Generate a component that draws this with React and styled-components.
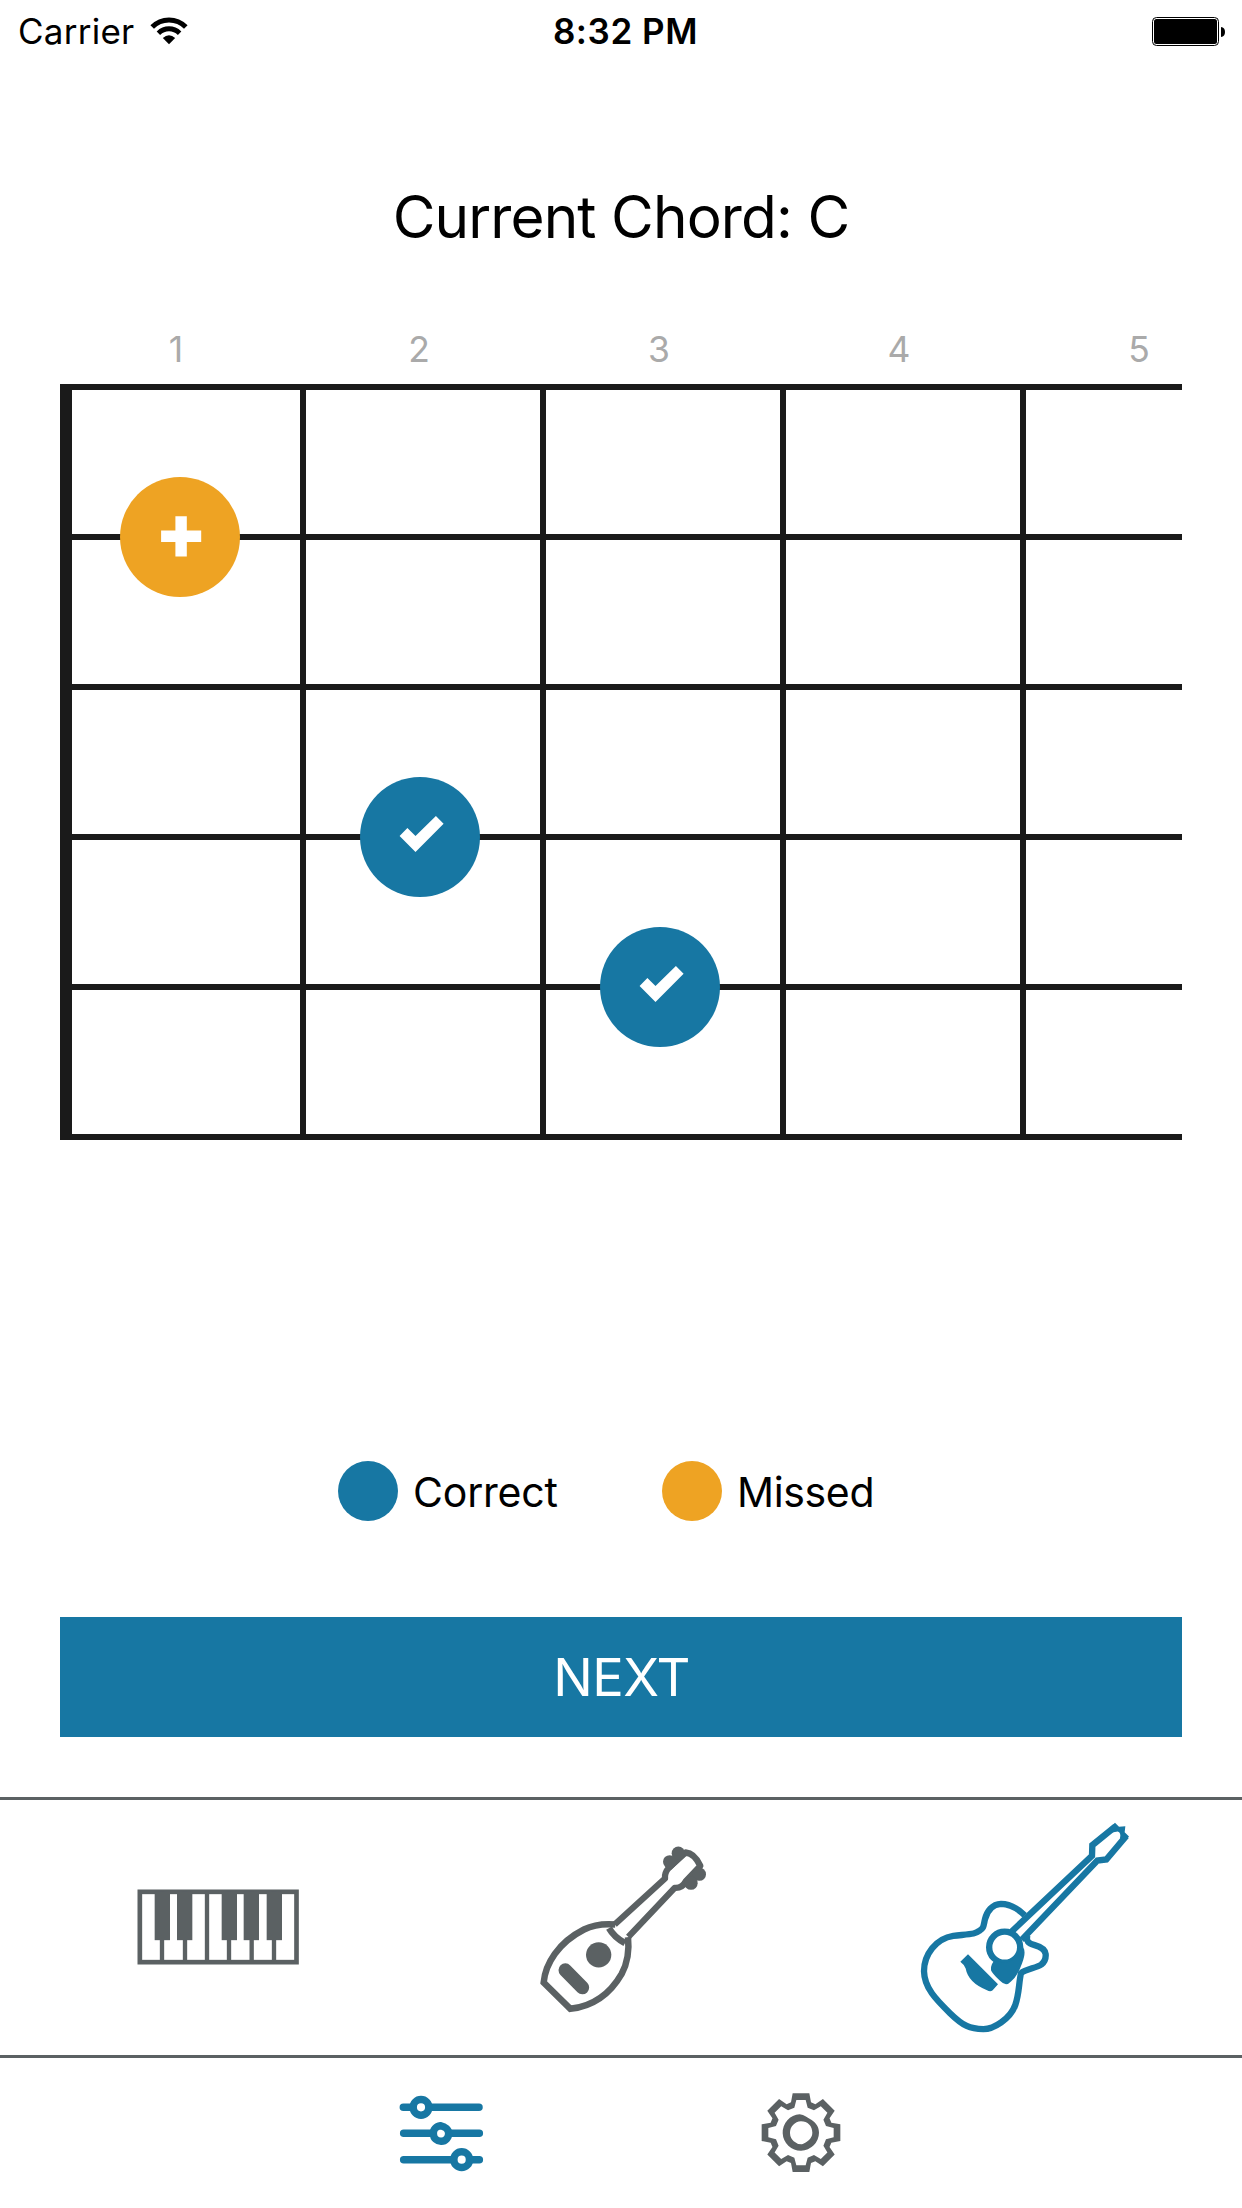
import React from "react";
import styled, { createGlobalStyle } from "styled-components";

const BLUE = "#1777a3";
const ORANGE = "#eea323";
const INK = "#1a1a1a";
const GRAY = "#5b6163";

const GlobalStyle = createGlobalStyle`
  * { box-sizing: border-box; }
  body {
    margin: 0;
    background: #fff;
    color: #000;
    font-family: Inter, "Liberation Sans", sans-serif;
  }
`;

const Screen = styled.div`
  display: flex;
  flex-direction: column;
  width: 1242px;
  height: 2208px;
  overflow: hidden;
  background: #fff;
`;

const StatusBar = styled.header`
  display: grid;
  grid-template-columns: 1fr auto 1fr;
  align-items: center;
  height: 62px;
  padding: 0 17px 0 18px;
  font-size: 35px;
  line-height: 62px;
`;

const Carrier = styled.div`
  display: flex;
  align-items: center;
  gap: 16px;
  letter-spacing: 0.25px;
`;

const Clock = styled.div`
  font-weight: 600;
  letter-spacing: 0.55px;
  padding-left: 8px;
`;

const Battery = styled.div`
  display: flex;
  justify-content: flex-end;
`;

const Title = styled.h1`
  margin: 115px 0 0;
  height: 80px;
  line-height: 80px;
  font-size: 58.5px;
  font-weight: 400;
  letter-spacing: -0.9px;
  text-align: center;
  white-space: nowrap;
`;

const FretLabels = styled.div`
  display: grid;
  grid-template-columns: 234px 246px repeat(3, 240px);
  height: 70px;
  margin: 57px 0 0 59px;
  line-height: 71px;
  font-size: 35.5px;
  color: #aaaaaa;
  text-align: center;
`;

const FretLabel = styled.span`
  padding-right: ${(p) => (p.$second ? 6 : 0)}px;
  margin-left: ${(p) => (p.$second ? 6 : 0)}px;
  margin-right: ${(p) => (p.$second ? -6 : 0)}px;
`;

const Fretboard = styled.div`
  display: grid;
  grid-template-columns: repeat(4, 240px) 162px;
  grid-auto-rows: 150px;
  width: 1122px;
  height: 756px;
  margin: 0 60px;
  border-bottom: 6px solid ${INK};
`;

const FretCell = styled.div`
  position: relative;
  border-top: 6px solid ${INK};
  border-left: ${(p) => (p.$nut ? 12 : 6)}px solid ${INK};
`;

const Marker = styled.div`
  position: absolute;
  z-index: 1;
  left: ${(p) => (p.$nut ? 48 : 54)}px;
  bottom: -63px;
  width: 120px;
  height: 120px;
  border-radius: 50%;
  background: ${(p) => p.$color};
`;

const Legend = styled.div`
  display: flex;
  align-items: center;
  height: 60px;
  margin: 321px 0 0 338px;
`;

const LegendItem = styled.div`
  display: flex;
  align-items: center;
  width: 324px;
  gap: 15px;
  font-size: 41px;
  line-height: 60px;
  letter-spacing: ${(p) => p.$spacing};
`;

const LegendText = styled.span`
  padding-top: 2px;
`;

const LegendDot = styled.span`
  width: 60px;
  height: 60px;
  border-radius: 50%;
  background: ${(p) => p.$color};
`;

const NextButton = styled.button`
  height: 120px;
  margin: 96px 60px 60px;
  padding: 0 0 0 1px;
  border: 0;
  background: ${BLUE};
  color: #fff;
  font: 400 52.5px/120px Inter, "Liberation Sans", sans-serif;
  letter-spacing: -0.5px;
`;

const InstrumentBar = styled.nav`
  display: grid;
  grid-template-columns: repeat(3, 1fr);
  place-items: center;
  height: 258px;
  border-top: 3px solid ${GRAY};
`;

const BottomBar = styled.nav`
  display: flex;
  justify-content: center;
  align-items: center;
  height: 153px;
  border-top: 3px solid ${GRAY};
`;

const BottomTab = styled.div`
  display: grid;
  place-items: center;
  width: 360px;
`;

const Icon = styled.svg`
  display: block;
  flex: none;
`;

function WifiIcon() {
  return (
    <Icon width="38" height="28" viewBox="0 0 38 28" fill="none" stroke="#000" strokeWidth="5">
      <path d="M2.2 10C11.5 0.5 26.5 0.5 35.8 10" />
      <path d="M8.4 16.2C14.5 10.4 23.5 10.4 29.6 16.2" />
      <path d="M12.8 20.9Q19 15.6 25.2 20.9L19 27.2Z" fill="#000" stroke="none" />
    </Icon>
  );
}

function BatteryIcon() {
  return (
    <Icon width="73" height="29" viewBox="0 0 73 29">
      <rect x="0.5" y="0.5" width="66" height="28" rx="4" fill="#fff" stroke="#000" />
      <rect x="2" y="2" width="63" height="25" rx="2.5" />
      <path d="M69 10Q73 10.5 73 15Q73 19.5 69 20Z" />
    </Icon>
  );
}

function PlusMark() {
  return (
    <Icon width="120" height="120" viewBox="0 0 120 120" fill="#fff">
      <path d="M55.4 39.3H66.8V53.6H81.2V65H66.8V79.5H55.4V65H41.1V53.6H55.4Z" />
    </Icon>
  );
}

function CheckMark() {
  return (
    <Icon width="120" height="120" viewBox="0 0 120 120" fill="#fff">
      <path d="M39.6 59.1L47.4 51.1L55.5 59.1L75.9 39L83.6 46.7L55.5 75Z" />
    </Icon>
  );
}

const BLACK_KEYS = [104, 171, 305, 371, 440];
const KEY_LINES = [126, 195, 261, 327, 395, 462];

function PianoIcon() {
  return (
    <Icon width="200" height="200" viewBox="-39 142.5 600 600" fill={GRAY}>
      <rect x="59.5" y="334" width="470" height="211" fill="#fff" stroke={GRAY} strokeWidth="14" />
      {KEY_LINES.map((x) => (
        <rect key={x} x={x - 6.5} y="334" width="13" height="210" />
      ))}
      {BLACK_KEYS.map((x) => (
        <rect key={x} x={x} y="334" width="46" height="145" />
      ))}
    </Icon>
  );
}

function UkuleleIcon() {
  return (
    <Icon width="210" height="210" viewBox="-12 7.5 630 630" fill="none" stroke={GRAY} strokeWidth="19.5">
      <path d="M286 312C250 309 220 313 192 327C115 366 76 430 71 486L151 565C230 556 275 512 305 460C324 425 328 388 324 350" />
      <path d="M267 323Q282 350 315 368" />
      <path d="M284 312L435 174Q433 157 447 141L497 96Q523 98 541 136L497 183Q486 204 464 202L325 349" strokeWidth="19" strokeLinejoin="round" />
      <path d="M440 128L478 92L500 104L452 150Z M492 176L530 141L543 152L510 190Z" fill={GRAY} stroke="none" />
      <g fill={GRAY} stroke="none">
        <circle cx="475" cy="98" r="20" />
        <circle cx="449" cy="124" r="20" />
        <circle cx="538" cy="161" r="20" />
        <circle cx="513" cy="188" r="20" />
        <circle cx="236" cy="403" r="38" />
      </g>
      <path d="M136 449L187 501" strokeWidth="41" strokeLinecap="round" />
    </Icon>
  );
}

function GuitarIcon() {
  return (
    <Icon width="250" height="250" viewBox="30 -22.5 750 750" fill="none" stroke={BLUE} strokeWidth="19">
      <path d="M374 314C350 291 328 280 303 280C276 281 261 303 255 326C250 348 252 352 238 361C225 371 217 370 160 376C108 384 72 432 72 482C73 532 108 567 150 608C190 647 210 655 250 656C280 656 331 626 346 583C358 548 356 519 363 488C378 476 410 472 424 462C434 454 438 444 437 431C435 415 422 409 404 404C384 398 378 392 382 375" />
      <path d="M335 363L576 136L577 104L646 48" />
      <path d="M365 388L592 150L619 147L679 76" />
      <path d="M645 37L657 49L676 47L674 65L687 78L673 92L660 83Q664 66 653 63L637 66L630 51Z" fill={BLUE} stroke="none" />
      <circle cx="314" cy="410" r="46.5" />
      <path d="M284 451Q272 460 273 479Q276 488 300 511Q318 530 333 513Q354 495 366 459Q379 424 370 412L358 405Q360 447 314 457Z" fill={BLUE} stroke="none" />
      <path d="M204 431L294 521L278 539Q271 545 261 539Q205 517 197 474Q191 461 181 454Z" fill={BLUE} stroke="none" />
    </Icon>
  );
}

function SlidersIcon() {
  return (
    <Icon width="130" height="110" viewBox="-12 -7 390 330" fill="#fff" stroke={BLUE} strokeWidth="22.5" strokeLinecap="round">
      <path d="M70 81H297M71 159H298M71 238H298" />
      <circle cx="123" cy="81" r="23.5" />
      <path d="M181 136C196 139 206 148 206 159A23 23.5 0 1 1 181 136Z" />
      <circle cx="245" cy="238" r="23.5" />
    </Icon>
  );
}

// Repeats one tooth profile eight times around the hub.
function toothRing(profile) {
  const points = [];
  for (let i = 0; i < 8; i += 1) {
    const c = Math.cos((i * Math.PI) / 4);
    const s = Math.sin((i * Math.PI) / 4);
    profile.forEach(([x, y]) => points.push(`${(x * c - y * s).toFixed(1)} ${(x * s + y * c).toFixed(1)}`));
  }
  return `M${points.join("L")}Z`;
}

const GEAR =
  toothRing([[-30, -91], [-25, -118], [25, -118], [30, -91]]) +
  toothRing([[-20, -75], [-14, -98], [14, -98], [20, -75]]);

function GearIcon() {
  return (
    <Icon width="110" height="110" viewBox="-165 -164 330 330" fill={GRAY} fillRule="evenodd">
      <path d={GEAR} />
      <path d="M-4 -55C10 -53 20 -45 32 -38C46 -29 54 -16 54 0A54.5 54.5 0 1 1 -4 -55Z M0 -34A34 34 0 1 0 3 35C18 28 34 18 34 0C34 -20 20 -34 0 -34Z" />
    </Icon>
  );
}

const FRETS = [1, 2, 3, 4, 5];
const STRING_GAPS = [0, 1, 2, 3, 4];
const NOTES = { "0-1": "missed", "2-2": "correct", "3-3": "correct" };

function Note({ kind, nut }) {
  return (
    <Marker $nut={nut} $color={kind === "correct" ? BLUE : ORANGE}>
      {kind === "correct" ? <CheckMark /> : <PlusMark />}
    </Marker>
  );
}

export default function App() {
  return (
    <Screen>
      <GlobalStyle />
      <StatusBar>
        <Carrier>
          Carrier
          <WifiIcon />
        </Carrier>
        <Clock>8:32 PM</Clock>
        <Battery>
          <BatteryIcon />
        </Battery>
      </StatusBar>
      <Title>Current Chord: C</Title>
      <FretLabels>
        {FRETS.map((fret) => (
          <FretLabel key={fret} $second={fret === 2}>
            {fret}
          </FretLabel>
        ))}
      </FretLabels>
      <Fretboard>
        {STRING_GAPS.map((row) =>
          FRETS.map((fret) => {
            const kind = NOTES[`${row}-${fret}`];
            return (
              <FretCell key={`${row}-${fret}`} $nut={fret === 1}>
                {kind && <Note kind={kind} nut={fret === 1} />}
              </FretCell>
            );
          })
        )}
      </Fretboard>
      <Legend>
        <LegendItem $spacing="-0.2px">
          <LegendDot $color={BLUE} />
          <LegendText>Correct</LegendText>
        </LegendItem>
        <LegendItem $spacing="-0.35px">
          <LegendDot $color={ORANGE} />
          <LegendText>Missed</LegendText>
        </LegendItem>
      </Legend>
      <NextButton>NEXT</NextButton>
      <InstrumentBar>
        <PianoIcon />
        <UkuleleIcon />
        <GuitarIcon />
      </InstrumentBar>
      <BottomBar>
        <BottomTab>
          <SlidersIcon />
        </BottomTab>
        <BottomTab>
          <GearIcon />
        </BottomTab>
      </BottomBar>
    </Screen>
  );
}
